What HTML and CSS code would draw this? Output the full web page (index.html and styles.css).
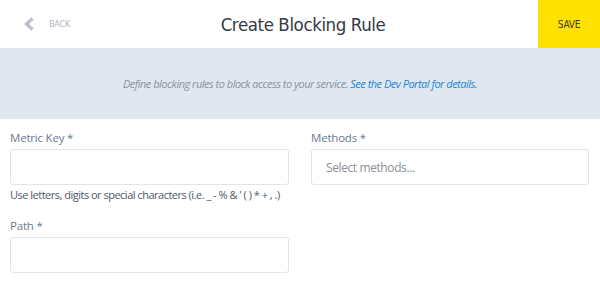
FILE: index.html
```html
<!DOCTYPE html>
<html>
<head>
<meta charset="utf-8">
<link rel="stylesheet" href="styles.css">
</head>
<body>
<header class="topbar">
  <a class="back">
    <svg class="chev" width="12" height="14" viewBox="0 0 12 14"><path d="M9.5 1.5 L3.5 7 L9.5 12.5" fill="none" stroke="#b7bfcb" stroke-width="3.2" stroke-linejoin="miter"/></svg>
    <span class="back-text">BACK</span>
  </a>
  <h1 class="title">Create Blocking Rule</h1>
  <button class="save">SAVE</button>
</header>
<section class="info">
  <p>Define blocking rules to block access to your service. <a class="link">See the Dev Portal for details.</a></p>
</section>
<form class="form">
  <div class="field">
    <label class="label">Metric Key *</label>
    <div class="input"></div>
    <p class="help">Use letters, digits or special characters (i.e. _ - % &amp; ' ( ) * + , .)</p>
  </div>
  <div class="field">
    <label class="label">Methods *</label>
    <div class="input select"><span class="placeholder">Select methods...</span></div>
  </div>
  <div class="field">
    <label class="label">Path *</label>
    <div class="input"></div>
  </div>
</form>
</body>
</html>
```
FILE: styles.css
```css
* { box-sizing: border-box; }
html, body { margin: 0; padding: 0; background: #fff; }
body { width: 600px; height: 300px; overflow: hidden; font-family: "Open Sans", sans-serif; }

.topbar {
  height: 48px;
  display: flex;
  align-items: center;
  background: #fff;
}
.back {
  display: flex;
  align-items: center;
  padding-left: 23px;
  width: 62px;
  white-space: nowrap;
}
.chev { display: block; flex: none; }
.back-text {
  margin-left: 14px;
  font-family: "DejaVu Sans Condensed", sans-serif;
  font-size: 9px;
  color: #adb5c2;
  letter-spacing: -0.2px;
}
.title {
  flex: 1;
  margin: 0;
  text-align: center;
  font-family: "DejaVu Sans Condensed", sans-serif;
  font-weight: normal;
  font-size: 18.5px;
  letter-spacing: -0.4px;
  color: #333a44;
  padding-left: 6px;
}
.save {
  width: 62px;
  height: 48px;
  border: 0;
  margin: 0;
  background: #ffe100;
  font-family: "DejaVu Sans Condensed", sans-serif;
  font-size: 10px;
  letter-spacing: -0.2px;
  color: #3a3a2a;
  padding: 0;
}

.info {
  height: 71px;
  background: #e0e7ef;
  display: flex;
  align-items: center;
  justify-content: center;
}
.info p {
  margin: 0;
  font-style: italic;
  font-size: 11px;
  letter-spacing: -0.5px;
  color: #8a92a2;
}
.link { color: #1a87d8; }

.form {
  display: grid;
  grid-template-columns: 279px 278px;
  column-gap: 22px;
  padding: 10px 10px 0 10px;
}
.field { display: flex; flex-direction: column; }
.label {
  font-size: 11.5px;
  letter-spacing: -0.2px;
  color: #6c7a8f;
  line-height: 16px;
  margin-top: 1px;
  margin-bottom: 3px;
}
.input {
  height: 36px;
  border: 1px solid #e1e4e9;
  border-radius: 3px;
  background: #fff;
}
.select { display: flex; align-items: center; padding-left: 14px; }
.placeholder { font-size: 12px; letter-spacing: -0.4px; color: #8b9099; }
.help {
  margin: 2px 0 0 0;
  font-size: 11px;
  letter-spacing: -0.5px;
  color: #505a66;
  line-height: 16px;
  white-space: nowrap;
}
.field:nth-child(3) { margin-top: 14px; }
```
